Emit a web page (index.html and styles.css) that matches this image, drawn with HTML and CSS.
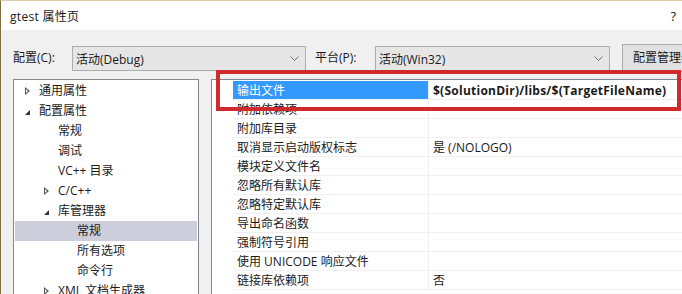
FILE: index.html
```html
<!DOCTYPE html>
<html lang="zh-CN">
<head>
    <meta charset="UTF-8">
    <title>gtest 属性页</title>
    <link rel="stylesheet" href="styles.css">
</head>
<body>
<div class="window">
    <div class="titlebar">
        <span class="title">gtest 属性页</span>
        <span class="help">?</span>
    </div>
    <div class="dialog">
        <!--配置/平台-->
        <div class="toolbar">
            <span class="label label-config">配置(C):</span>
            <div class="combo combo-config">
                <span>活动(Debug)</span>
                <svg class="chevron" width="9" height="6" viewBox="0 0 9 6"><polyline points="0.5,0.5 4.5,4.5 8.5,0.5" fill="none" stroke="#707070" stroke-width="1"/></svg>
            </div>
            <span class="label label-platform">平台(P):</span>
            <div class="combo combo-platform">
                <span>活动(Win32)</span>
                <svg class="chevron" width="9" height="6" viewBox="0 0 9 6"><polyline points="0.5,0.5 4.5,4.5 8.5,0.5" fill="none" stroke="#707070" stroke-width="1"/></svg>
            </div>
            <div class="button">配置管理器(O)...</div>
        </div>

        <div class="main">
            <!--左侧树-->
            <ul class="tree">
                <li class="lv0"><span class="arrow closed"></span>通用属性</li>
                <li class="lv0"><span class="arrow open"></span>配置属性</li>
                <li class="lv1"><span class="arrow"></span>常规</li>
                <li class="lv1"><span class="arrow"></span>调试</li>
                <li class="lv1"><span class="arrow"></span>VC++ 目录</li>
                <li class="lv1"><span class="arrow closed"></span>C/C++</li>
                <li class="lv1"><span class="arrow open"></span>库管理器</li>
                <li class="lv2 current"><span class="arrow"></span>常规</li>
                <li class="lv2"><span class="arrow"></span>所有选项</li>
                <li class="lv2"><span class="arrow"></span>命令行</li>
                <li class="lv1"><span class="arrow closed"></span>XML 文档生成器</li>
            </ul>

            <!--右侧属性表-->
            <div class="grid">
                <div class="row selected"><span class="gutter"></span><span class="name">输出文件</span><span class="value bold">$(SolutionDir)/libs/$(TargetFileName)</span></div>
                <div class="row"><span class="gutter"></span><span class="name">附加依赖项</span><span class="value"></span></div>
                <div class="row"><span class="gutter"></span><span class="name">附加库目录</span><span class="value"></span></div>
                <div class="row"><span class="gutter"></span><span class="name">取消显示启动版权标志</span><span class="value">是 (/NOLOGO)</span></div>
                <div class="row"><span class="gutter"></span><span class="name">模块定义文件名</span><span class="value"></span></div>
                <div class="row"><span class="gutter"></span><span class="name">忽略所有默认库</span><span class="value"></span></div>
                <div class="row"><span class="gutter"></span><span class="name">忽略特定默认库</span><span class="value"></span></div>
                <div class="row"><span class="gutter"></span><span class="name">导出命名函数</span><span class="value"></span></div>
                <div class="row"><span class="gutter"></span><span class="name">强制符号引用</span><span class="value"></span></div>
                <div class="row"><span class="gutter"></span><span class="name">使用 UNICODE 响应文件</span><span class="value"></span></div>
                <div class="row"><span class="gutter"></span><span class="name">链接库依赖项</span><span class="value">否</span></div>
            </div>

            <!--红框标注-->
            <div class="mark"></div>
        </div>
    </div>
</div>
</body>
</html>
```

FILE: styles.css
```css
* {
    padding: 0;
    margin: 0;
    list-style: none;
    box-sizing: border-box;
}

body {
    width: 682px;
    height: 294px;
    overflow: hidden;
    font-family: "Open Sans", "Noto Sans CJK SC", sans-serif;
    font-size: 12px;
    color: #1a1a1a;
}

.window {
    width: 682px;
    height: 294px;
    border-left: 1px solid #7d7043;
    border-top: 1px solid #dccfa8;
    display: flex;
    flex-direction: column;
}

.titlebar {
    height: 29px;
    background: #fff;
    display: flex;
    align-items: center;
    justify-content: space-between;
    padding: 0 6px 0 9px;
    flex: none;
}

.title {
    letter-spacing: 0.3px;
}

.help {
    font-size: 13px;
    color: #222;
}

.dialog {
    flex: 1;
    background: #f0f0f0;
    padding: 13px 0 0 12px;
    overflow: hidden;
}

.toolbar {
    display: flex;
    height: 29px;
    white-space: nowrap;
}

.toolbar > * {
    flex: none;
}

.label {
    line-height: 29px;
}

.label-config {
    width: 59px;
}

.label-platform {
    width: 60px;
    margin-left: 9px;
}

.combo {
    height: 25px;
    margin-top: 3px;
    background: #e6e6e6;
    border: 1px solid #acacac;
    display: flex;
    align-items: center;
    justify-content: space-between;
    padding: 0 6px 0 3px;
}

.combo-config {
    width: 234px;
}

.combo-platform {
    width: 235px;
}

.button {
    margin-left: 12px;
    margin-top: 1px;
    height: 28px;
    line-height: 26px;
    padding: 0 10px;
    background: #e1e1e1;
    border: 1px solid #adadad;
}

.main {
    position: relative;
    display: flex;
    margin-top: 7px;
}

.tree {
    width: 186px;
    height: 240px;
    flex: none;
    background: #fff;
    border: 1px solid #828790;
    padding: 1px 1px 0 1px;
}

.tree li {
    height: 20px;
    line-height: 20px;
    display: flex;
    align-items: center;
    white-space: nowrap;
}

.tree li.current {
    background: #cccedb;
}

.lv0 {
    padding-left: 10px;
}

.lv1 {
    padding-left: 29px;
}

.lv2 {
    padding-left: 48px;
}

.arrow {
    width: 14px;
    height: 20px;
    flex: none;
    position: relative;
}

.arrow.closed::before {
    content: "";
    position: absolute;
    left: 0;
    top: 6px;
    border-left: 5px solid #555;
    border-top: 4px solid transparent;
    border-bottom: 4px solid transparent;
}

.arrow.closed::after {
    content: "";
    position: absolute;
    left: 1px;
    top: 8px;
    border-left: 2px solid #fff;
    border-top: 2px solid transparent;
    border-bottom: 2px solid transparent;
}

.arrow.open::before {
    content: "";
    position: absolute;
    left: 0;
    top: 9px;
    border-right: 5px solid #333;
    border-top: 5px solid transparent;
}

.grid {
    flex: 1;
    margin-left: 12px;
    height: 240px;
    background: #fff;
    border-left: 1px solid #828790;
    border-top: 1px solid #828790;
    padding-top: 1px;
}

.row {
    display: flex;
    height: 19px;
    white-space: nowrap;
}

.gutter {
    width: 21px;
    flex: none;
}

.name {
    width: 196px;
    flex: none;
    padding-left: 4px;
    line-height: 19px;
    border-bottom: 1px solid #f0f0f0;
    border-right: 1px solid #f0f0f0;
}

.value {
    flex: 1;
    padding-left: 4px;
    line-height: 19px;
    border-bottom: 1px solid #f0f0f0;
}

.row.selected .name {
    background: #3399ff;
    color: #fff;
}

.bold {
    font-weight: bold;
    letter-spacing: 0.25px;
}

.mark {
    position: absolute;
    left: 203px;
    top: -9px;
    width: 465px;
    height: 41px;
    border: 4px solid #d12a2d;
}
```
